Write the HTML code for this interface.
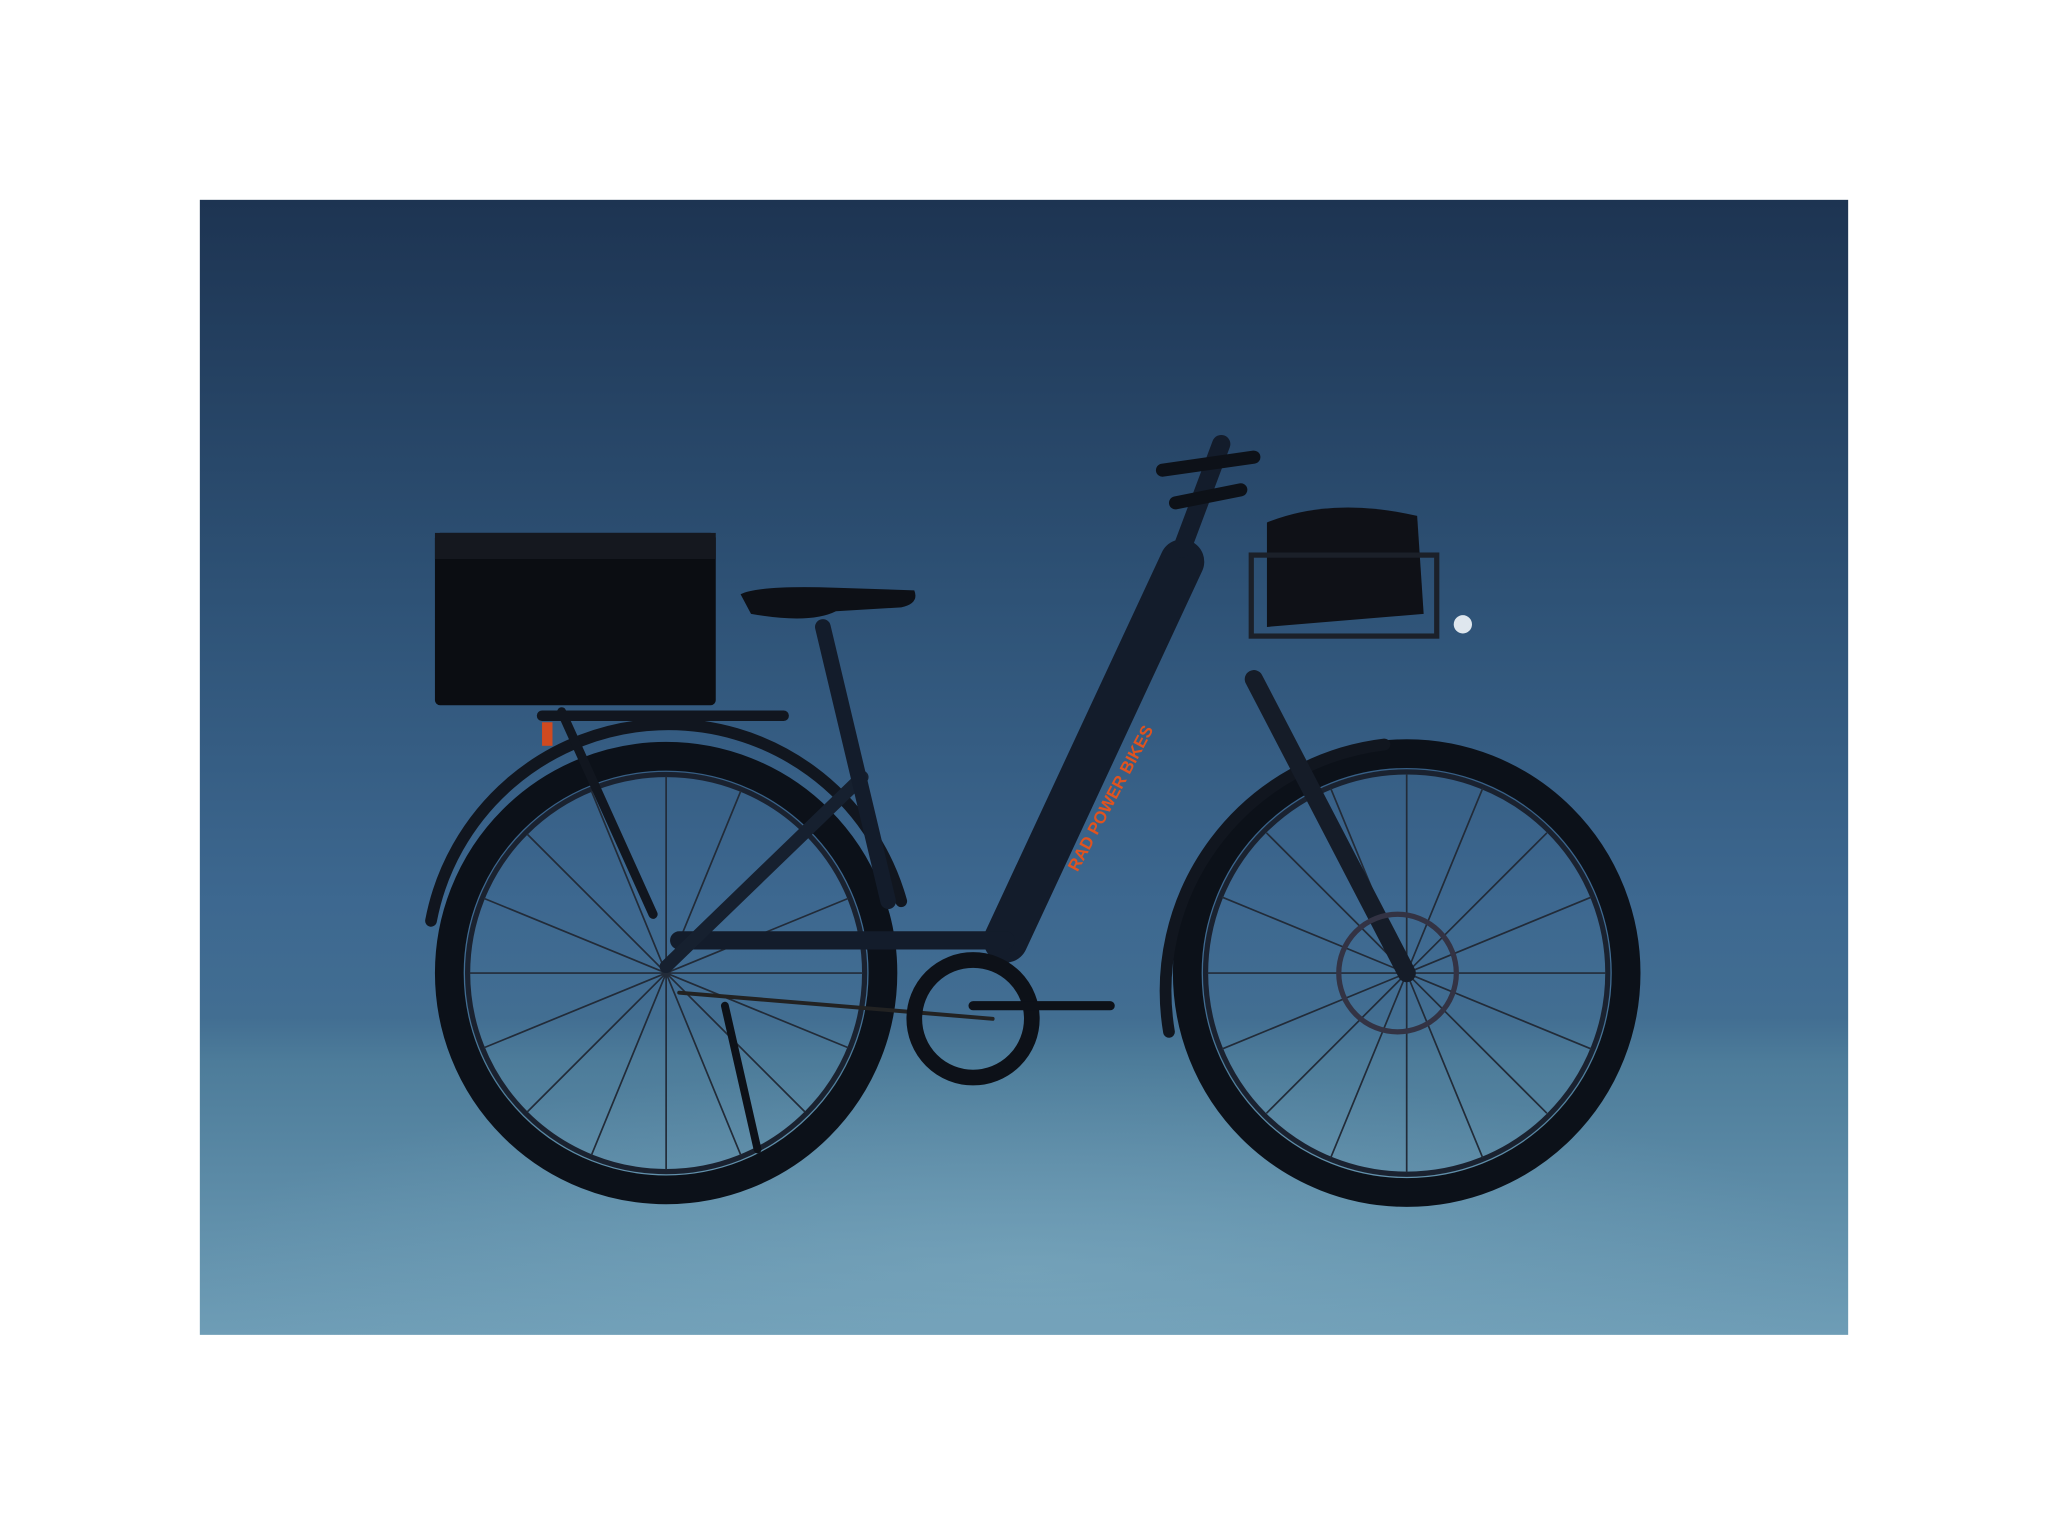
<!DOCTYPE html>
<html><head><meta charset="utf-8"><style>
html,body{margin:0;padding:0;background:#fff;}
svg{display:block}
</style></head><body>
<svg width="2048" height="1536" viewBox="0 0 1568 1176" xmlns="http://www.w3.org/2000/svg">
<defs>
<linearGradient id="bg" x1="0" y1="0" x2="0" y2="1">
<stop offset="0" stop-color="#1d3452"/>
<stop offset="0.35" stop-color="#2e5276"/>
<stop offset="0.62" stop-color="#3d6890"/>
<stop offset="0.72" stop-color="#426e92"/>
<stop offset="0.76" stop-color="#4d7c9a"/>
<stop offset="1" stop-color="#6e9db6"/>
</linearGradient>
<radialGradient id="glow" cx="0.5" cy="0.85" r="0.5">
<stop offset="0" stop-color="#80adc2" stop-opacity="0.5"/>
<stop offset="1" stop-color="#80adc2" stop-opacity="0"/>
</radialGradient>
</defs>
<rect x="153" y="153" width="1262" height="869" fill="url(#bg)"/>
<rect x="153" y="700" width="1262" height="322" fill="url(#glow)"/>
<g fill="none" stroke="#0c1119" stroke-linecap="round">
<circle cx="510" cy="745" r="166" stroke-width="22"/>
<circle cx="1077" cy="745" r="168" stroke-width="22"/>
<circle cx="510" cy="745" r="152" stroke="#1a2230" stroke-width="4"/>
<circle cx="1077" cy="745" r="154" stroke="#1a2230" stroke-width="4"/>
<path d="M330 705 A185 185 0 0 1 690 690" stroke="#11161f" stroke-width="9"/>
<path d="M895 790 A190 190 0 0 1 1060 570" stroke="#11161f" stroke-width="9"/>
<g stroke="#222b38" stroke-width="1.3">
<path d="M510 745 L510 595 M510 745 L510 895 M510 745 L360 745 M510 745 L660 745 M510 745 L404 639 M510 745 L616 851 M510 745 L616 639 M510 745 L404 851 M510 745 L453 606 M510 745 L567 884 M510 745 L567 606 M510 745 L453 884 M510 745 L371 688 M510 745 L649 802 M510 745 L649 688 M510 745 L371 802"/>
<path d="M1077 745 L1077 593 M1077 745 L1077 897 M1077 745 L925 745 M1077 745 L1229 745 M1077 745 L970 638 M1077 745 L1184 852 M1077 745 L1184 638 M1077 745 L970 852 M1077 745 L1019 604 M1077 745 L1135 886 M1077 745 L1135 604 M1077 745 L1019 886 M1077 745 L936 687 M1077 745 L1218 803 M1077 745 L1218 687 M1077 745 L936 803"/>
</g>
<path d="M905 430 L770 720" stroke="#131c2b" stroke-width="34"/>
<path d="M770 720 L520 720" stroke="#131c2b" stroke-width="14"/>
<path d="M510 740 L660 595" stroke="#16202f" stroke-width="10"/>
<path d="M630 480 L680 690" stroke="#131c2b" stroke-width="12"/>
<path d="M905 420 L935 340" stroke="#131c2b" stroke-width="14"/>
<path d="M960 520 L1077 745" stroke="#151c28" stroke-width="14"/>
<path d="M430 545 L500 700" stroke="#11161f" stroke-width="7"/>
<path d="M415 548 L600 548" stroke="#11161f" stroke-width="8"/>
<path d="M520 760 L760 780" stroke="#222" stroke-width="3"/>
<circle cx="745" cy="780" r="45" stroke="#0d1118" stroke-width="12"/>
<path d="M745 770 L850 770" stroke="#0d1118" stroke-width="7"/>
<path d="M890 360 L960 350 M900 385 L950 375" stroke="#0d1118" stroke-width="10"/>
<circle cx="1070" cy="745" r="45" stroke="#334" stroke-width="4"/>
<path d="M580 880 L555 770" stroke="#0d1118" stroke-width="6"/>
</g>
<path d="M567 455 Q580 448 640 450 L700 452 Q704 462 690 465 L640 468 Q620 478 575 470 Z" fill="#0d1016"/>
<rect x="333" y="408" width="215" height="132" rx="4" fill="#0b0d12"/>
<rect x="333" y="408" width="215" height="20" fill="#15181f"/>
<path d="M970 400 Q1020 380 1085 395 L1090 470 L970 480 Z" fill="#0f1117"/>
<rect x="958" y="425" width="142" height="62" fill="none" stroke="#1b2029" stroke-width="4"/>
<circle cx="1120" cy="478" r="7" fill="#dfe7ee"/>
<rect x="415" y="553" width="8" height="18" fill="#d04a20"/>
<text x="0" y="0" transform="translate(825,668) rotate(-62)" font-family="Liberation Sans, sans-serif" font-weight="bold" font-size="13" fill="#e0531f">RAD POWER BIKES</text>
</svg>
</body></html>
